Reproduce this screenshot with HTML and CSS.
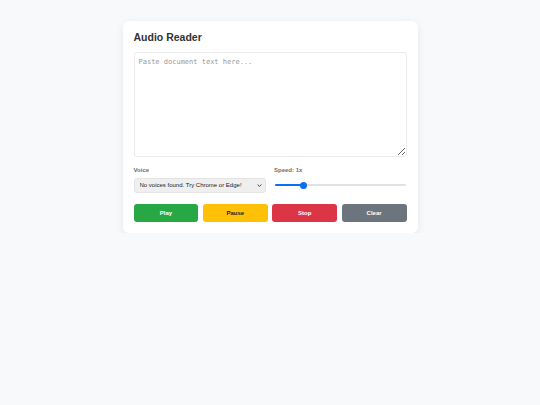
FILE: index.html
```html
<!DOCTYPE html>
<html lang="en">
<head>
<meta charset="utf-8">
<title>Audio Reader</title>
<link rel="stylesheet" href="styles.css">
</head>
<body>
  <main class="card">
    <h1 class="title">Audio Reader</h1>
    <textarea class="doc" placeholder="Paste document text here..."></textarea>
    <div class="controls">
      <div class="field">
        <label class="label" for="voice">Voice</label>
        <select id="voice" class="select">
          <option>No voices found. Try Chrome or Edge!</option>
        </select>
      </div>
      <div class="field">
        <label class="label" for="speed">Speed: 1x</label>
        <input id="speed" class="range" type="range" min="0.5" max="3" step="0.1" value="1">
      </div>
    </div>
    <div class="buttons">
      <button class="btn btn-play">Play</button>
      <button class="btn btn-pause">Pause</button>
      <button class="btn btn-stop">Stop</button>
      <button class="btn btn-clear">Clear</button>
    </div>
  </main>
</body>
</html>
```
FILE: styles.css
```css
* {
  box-sizing: border-box;
}

body {
  margin: 0;
  background: #f8f9fa;
  font-family: "Liberation Sans", Arial, sans-serif;
  color: #333;
}

.card {
  width: 295px;
  margin: 21px auto 0;
  padding: 10px 11px 11px;
  background: #fff;
  border-radius: 6px;
  box-shadow: 0 2px 8px rgba(0, 0, 0, 0.08);
}

.title {
  margin: 0 0 9px;
  font-size: 10.5px;
  line-height: 12px;
  font-weight: 700;
  color: #333;
}

.doc {
  display: block;
  width: 100%;
  height: 105px;
  margin: 0;
  padding: 5px 4px;
  border: 1px solid #ebebeb;
  border-radius: 3px;
  font-family: "DejaVu Sans Mono", "Liberation Mono", monospace;
  font-size: 7px;
  line-height: 9px;
  color: #333;
  resize: vertical;
}

.doc::placeholder {
  color: #999;
}

.controls {
  display: grid;
  grid-template-columns: 1fr 1fr;
  column-gap: 8px;
  margin-top: 10px;
}

.field {
  display: flex;
  flex-direction: column;
  gap: 3.5px;
}

.label {
  font-size: 6px;
  line-height: 7px;
  font-weight: 700;
  color: #707070;
}

.select {
  appearance: none;
  -webkit-appearance: none;
  width: 100%;
  height: 15px;
  margin: 0;
  padding: 0 12px 0 5px;
  border: 1px solid #e4e4e4;
  border-radius: 3px;
  background-color: #efefef;
  background-image: url("data:image/svg+xml,%3Csvg xmlns='http://www.w3.org/2000/svg' width='5' height='3' viewBox='0 0 5 3'%3E%3Cpath d='M0.6 0.5 L2.5 2.4 L4.4 0.5' fill='none' stroke='%23333' stroke-width='0.9'/%3E%3C/svg%3E");
  background-size: 5px 3px;
  background-repeat: no-repeat;
  background-position: right 3px center;
  font-family: "Liberation Sans", Arial, sans-serif;
  font-size: 6px;
  color: #222;
}

.range {
  -webkit-appearance: none;
  appearance: none;
  width: 131px;
  height: 15px;
  margin: 0 0 0 1px;
  background: transparent;
}

.range::-webkit-slider-runnable-track {
  height: 2.5px;
  border-radius: 2px;
  background: linear-gradient(to right, #0b6ff0 0, #0b6ff0 23%, #e2e2e2 23%, #e2e2e2 100%);
}

.range::-webkit-slider-thumb {
  -webkit-appearance: none;
  width: 7px;
  height: 7px;
  margin-top: -2.25px;
  border-radius: 50%;
  background: #0b6ff0;
  border: none;
}

.buttons {
  display: grid;
  grid-template-columns: repeat(4, 1fr);
  column-gap: 4.5px;
  margin-top: 11.5px;
}

.btn {
  height: 17.5px;
  margin: 0;
  padding: 0;
  border: none;
  border-radius: 3px;
  font-family: "Liberation Sans", Arial, sans-serif;
  font-size: 6px;
  font-weight: 700;
  color: #fff;
  cursor: pointer;
}

.btn-play {
  background: #28a745;
}

.btn-pause {
  background: #ffc107;
  color: #212529;
}

.btn-stop {
  background: #dc3545;
}

.btn-clear {
  background: #6c757d;
}
```
